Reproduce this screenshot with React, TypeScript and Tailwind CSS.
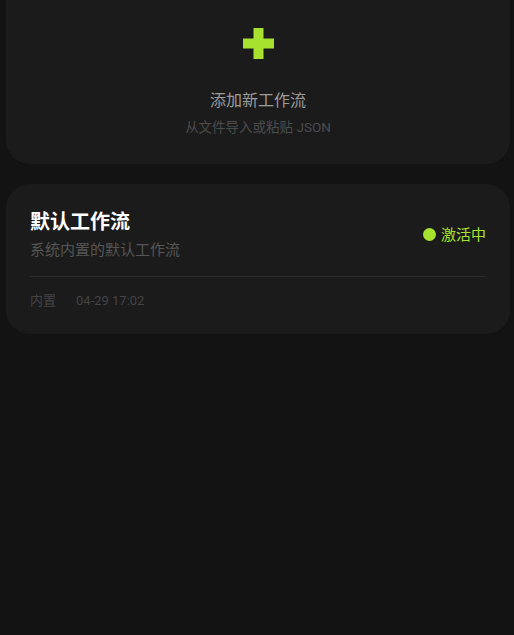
export default function App() {
  return (
    <main
      className="min-h-[635px] bg-[#131313] pl-[6px] pr-[4px] overflow-hidden"
      style={{ fontFamily: 'Roboto, "Noto Sans CJK SC", sans-serif' }}
    >
      <div className="-mt-6 flex flex-col gap-5">
        {/* add new workflow */}
        <div className="flex flex-col items-center rounded-[24px] bg-[#1b1b1b] pt-[52px] pb-[28px]">
          <svg width="31" height="31" viewBox="0 0 31 31">
            <path d="M10.5 0h10v10.5H31v10H20.5V31h-10V20.5H0v-10h10.5z" fill="#a6e22e" />
          </svg>
          <div className="mt-[31px] text-[16px] leading-[22px] text-[#9b9b9b]">添加新工作流</div>
          <div className="mt-[6px] text-[13.5px] leading-[18px] text-[#4c4c4c]">从文件导入或粘贴 JSON</div>
        </div>

        {/* default workflow */}
        <div className="rounded-[24px] bg-[#1b1b1b] px-6 pt-[25px] pb-[25px]">
          <div className="flex items-center justify-between">
            <div className="flex flex-col">
              <div className="text-[20px] font-bold leading-[26px] text-white">默认工作流</div>
              <div className="mt-[5px] text-[15px] leading-5 text-[#555555]">系统内置的默认工作流</div>
            </div>
            <div className="flex items-center gap-[5px] text-[15px] leading-5 text-[#a6e22e]">
              <span className="h-[13px] w-[13px] rounded-full bg-[#a6e22e]" />
              激活中
            </div>
          </div>
          <div className="mt-4 h-px bg-[#2a2a2a]" />
          <div className="mt-4 flex items-center gap-5 text-[13px] leading-4 text-[#444444]">
            <span>内置</span>
            <span>04-29 17:02</span>
          </div>
        </div>
      </div>
    </main>
  )
}
